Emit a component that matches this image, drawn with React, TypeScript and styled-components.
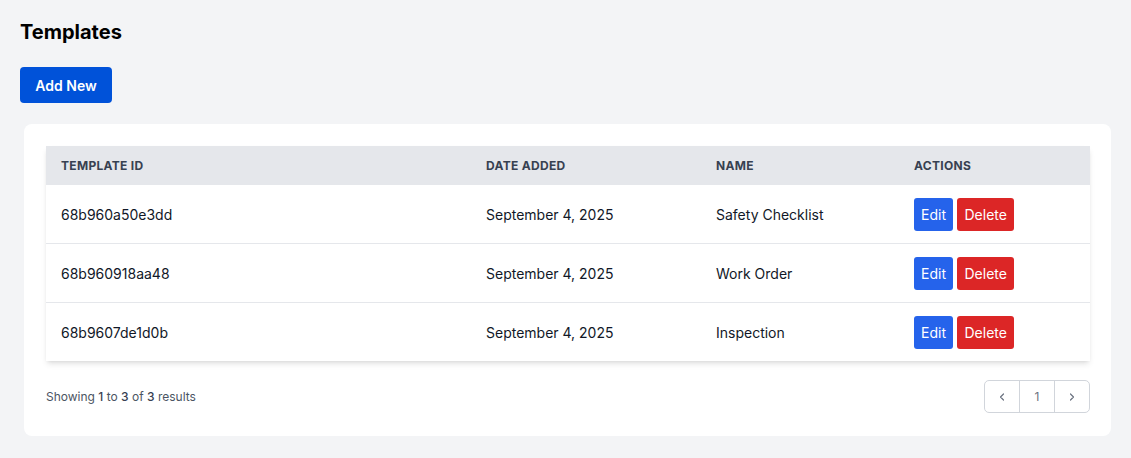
import React from 'react';
import styled, { createGlobalStyle } from 'styled-components';

const GlobalStyle = createGlobalStyle`
  html, body {
    margin: 0;
    padding: 0;
    background: #f3f4f6;
    font-family: Inter, "Liberation Sans", sans-serif;
    -webkit-font-smoothing: antialiased;
  }
`;

const Page = styled.div`
  padding: 18px 20px 20px 20px;
  min-height: 458px;
  box-sizing: border-box;
`;

const Title = styled.h1`
  margin: 0;
  font-size: 20px;
  line-height: 28px;
  font-weight: 700;
  color: #000;
`;

const AddButton = styled.button`
  margin-top: 21px;
  height: 36px;
  width: 92px;
  border: none;
  border-radius: 4px;
  background: #0052d9;
  color: #fff;
  font-family: inherit;
  font-size: 14px;
  font-weight: 600;
  cursor: pointer;
`;

const Card = styled.div`
  margin: 21px 0 0 4px;
  width: 1087px;
  background: #fff;
  border-radius: 8px;
  padding: 22px 21px 23px 22px;
  box-sizing: border-box;
`;

const TableWrap = styled.div`
  box-shadow: 0 4px 6px -1px rgba(0, 0, 0, 0.1), 0 2px 4px -2px rgba(0, 0, 0, 0.1);
`;

const Table = styled.table`
  width: 100%;
  border-collapse: collapse;
  table-layout: fixed;
`;

const Th = styled.th<{ $w: number }>`
  box-sizing: border-box;
  width: ${(p) => p.$w}px;
  height: 39px;
  padding: 0 15px;
  background: #e5e7eb;
  text-align: left;
  font-size: 12px;
  font-weight: 700;
  letter-spacing: 0.3px;
  color: #374151;
  text-transform: uppercase;
`;

const Tr = styled.tr`
  border-top: 1px solid #e5e7eb;
  &:first-child {
    border-top: none;
  }
`;

const Td = styled.td`
  height: 58px;
  padding: 0 15px;
  font-size: 14px;
  color: #111827;
`;

const Actions = styled.div`
  display: flex;
  gap: 4px;
`;

const ActionButton = styled.button<{ $danger?: boolean }>`
  height: 33px;
  padding: 0 ${(p) => (p.$danger ? 7.5 : 7)}px;
  border: none;
  border-radius: 3px;
  background: ${(p) => (p.$danger ? '#dc2626' : '#2563eb')};
  color: #fff;
  font-family: inherit;
  font-size: 14px;
  cursor: pointer;
`;

const Footer = styled.div`
  margin-top: 19px;
  display: flex;
  align-items: center;
  justify-content: space-between;
`;

const Summary = styled.div`
  font-size: 12px;
  color: #4b5563;
  b {
    font-weight: 500;
    color: #374151;
  }
`;

const Pager = styled.div`
  display: flex;
  border: 1px solid #d1d5db;
  border-radius: 5px;
  overflow: hidden;
`;

const PageCell = styled.div`
  width: 34px;
  height: 31px;
  display: flex;
  align-items: center;
  justify-content: center;
  font-size: 12px;
  color: #6b7280;
  & + & {
    border-left: 1px solid #d1d5db;
  }
`;

const Chevron = ({ left }: { left?: boolean }) => (
  <svg width="12" height="12" viewBox="0 0 20 20" fill="none">
    <path
      d={left ? 'M12.5 5 7.5 10l5 5' : 'M7.5 5l5 5-5 5'}
      stroke="#6b7280"
      strokeWidth="2"
      strokeLinecap="round"
      strokeLinejoin="round"
    />
  </svg>
);

const rows = [
  { id: '68b960a50e3dd', date: 'September 4, 2025', name: 'Safety Checklist' },
  { id: '68b960918aa48', date: 'September 4, 2025', name: 'Work Order' },
  { id: '68b9607de1d0b', date: 'September 4, 2025', name: 'Inspection' },
];

const App: React.FC = () => (
  <>
    <GlobalStyle />
    <Page>
      <Title>Templates</Title>
      <AddButton>Add New</AddButton>
      <Card>
        <TableWrap>
          <Table>
            <thead>
              <tr>
                <Th $w={425}>Template ID</Th>
                <Th $w={230}>Date Added</Th>
                <Th $w={198}>Name</Th>
                <Th $w={191}>Actions</Th>
              </tr>
            </thead>
            <tbody>
              {rows.map((r) => (
                <Tr key={r.id}>
                  <Td>{r.id}</Td>
                  <Td>{r.date}</Td>
                  <Td>{r.name}</Td>
                  <Td>
                    <Actions>
                      <ActionButton>Edit</ActionButton>
                      <ActionButton $danger>Delete</ActionButton>
                    </Actions>
                  </Td>
                </Tr>
              ))}
            </tbody>
          </Table>
        </TableWrap>
        <Footer>
          <Summary>
            Showing <b>1</b> to <b>3</b> of <b>3</b> results
          </Summary>
          <Pager>
            <PageCell>
              <Chevron left />
            </PageCell>
            <PageCell>1</PageCell>
            <PageCell>
              <Chevron />
            </PageCell>
          </Pager>
        </Footer>
      </Card>
    </Page>
  </>
);

export default App;
